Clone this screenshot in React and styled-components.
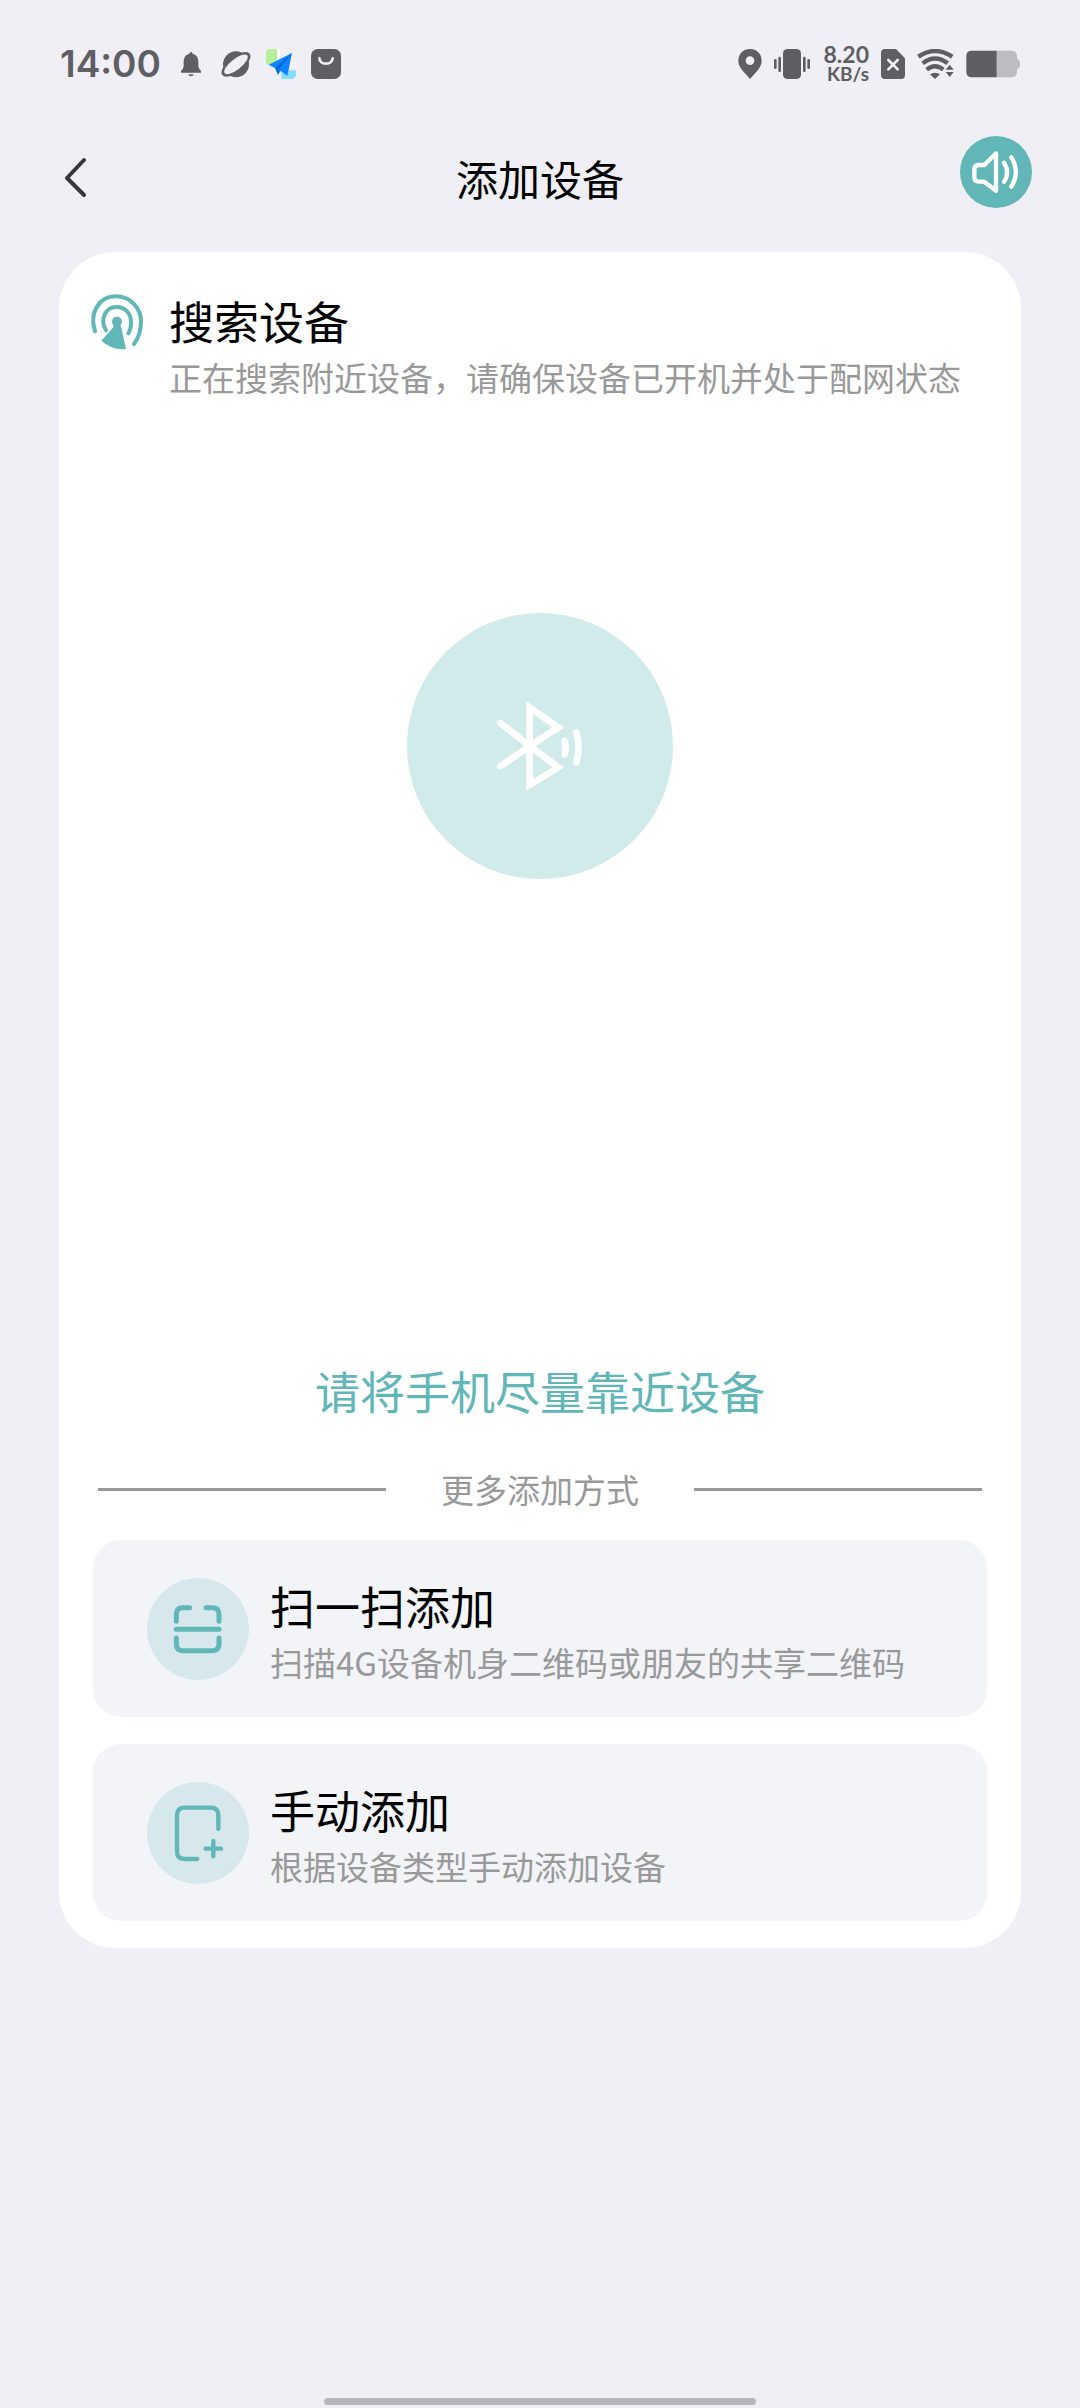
import React, { useState } from "react";
import styled, { createGlobalStyle } from "styled-components";

const options = [
  {
    id: "scan",
    title: "扫一扫添加",
    desc: "扫描4G设备机身二维码或朋友的共享二维码",
    Icon: ScanIcon,
  },
  {
    id: "manual",
    title: "手动添加",
    desc: "根据设备类型手动添加设备",
    Icon: ManualIcon,
  },
];

const App = () => {
  const [muted, setMuted] = useState(false);

  return (
    <>
      <GlobalStyle />
      <Page>
        <StatusBar>
          <StatusGroup $gap={15}>
            <Time>14:00</Time>
            <BellIcon />
            <PlanetIcon />
            <PlaneIcon />
            <BagIcon />
          </StatusGroup>
          <StatusGroup $gap={12}>
            <PinIcon />
            <VibrateIcon />
            <Speed>
              <SpeedValue>8.20</SpeedValue>
              <SpeedUnit>KB/s</SpeedUnit>
            </Speed>
            <SimIcon />
            <WifiIcon />
            <BatteryIcon />
          </StatusGroup>
        </StatusBar>

        <Header>
          <BackButton type="button" aria-label="返回">
            <svg width="24" height="42" viewBox="0 0 24 42" fill="none">
              <path
                d="M20 3L3 21L20 38"
                stroke="#38383c"
                strokeWidth="4"
                strokeLinecap="round"
                strokeLinejoin="round"
              />
            </svg>
          </BackButton>
          <PageTitle>添加设备</PageTitle>
          <SoundButton
            type="button"
            aria-label="语音提示"
            aria-pressed={!muted}
            onClick={() => setMuted((prev) => !prev)}
          >
            <SpeakerIcon muted={muted} />
          </SoundButton>
        </Header>

        <Main>
          <Card>
            <SearchHead>
              <RadarIcon />
              <TextBox>
                <ItemTitle as="h2">搜索设备</ItemTitle>
                <ItemDesc>正在搜索附近设备，请确保设备已开机并处于配网状态</ItemDesc>
              </TextBox>
            </SearchHead>

            <ScanArea>
              <ScanCircle>
                <BluetoothIcon />
              </ScanCircle>
            </ScanArea>

            <Hint>请将手机尽量靠近设备</Hint>

            <Divider>
              <Line />
              <ItemDesc>更多添加方式</ItemDesc>
              <Line />
            </Divider>

            <OptionList>
              {options.map(({ id, title, desc, Icon }) => (
                <Option key={id} type="button">
                  <Bubble>
                    <Icon />
                  </Bubble>
                  <TextBox>
                    <ItemTitle>{title}</ItemTitle>
                    <ItemDesc>{desc}</ItemDesc>
                  </TextBox>
                </Option>
              ))}
            </OptionList>
          </Card>
        </Main>

        <HomeBar />
      </Page>
    </>
  );
};

function BellIcon() {
  return (
    <svg width="30" height="30" viewBox="0 0 90 90" fill="#5f5e63">
      <path d="M45 9Q49 9 50 14Q66 18 67 36V52Q68 60 75 66V71H15V66Q22 60 23 52V36Q24 18 40 14Q41 9 45 9Z" />
      <path d="M37 76H53Q51 82 45 82Q39 82 37 76Z" />
    </svg>
  );
}

function PlanetIcon() {
  return (
    <svg width="30" height="30" viewBox="0 0 90 90" fill="none">
      <circle cx="45" cy="46" r="39" fill="#5f5e63" />
      <ellipse
        cx="45"
        cy="46"
        rx="52"
        ry="23"
        transform="rotate(-38 45 46)"
        fill="#5f5e63"
      />
      <ellipse
        cx="45"
        cy="46"
        rx="43"
        ry="16"
        transform="rotate(-38 45 46)"
        fill="#f0eff5"
      />
    </svg>
  );
}

function PlaneIcon() {
  return (
    <svg width="30" height="30" viewBox="0 0 90 90">
      <path d="M12 0H33V46H0V12Q0 0 12 0Z" fill="#b6f09a" />
      <path d="M33 0H42V46H33Z" fill="#fff" />
      <path d="M46 64H90V76Q90 90 76 90H46Z" fill="#86dcfb" />
      <path d="M78 12L8 47L28 58L36 77L44 66L64 80Z" fill="#0a84ff" />
      <path d="M78 12L28 58L36 77L38 61Z" fill="#0560cf" />
    </svg>
  );
}

function BagIcon() {
  return (
    <svg width="30" height="30" viewBox="0 0 90 90" fill="none">
      <rect width="90" height="90" rx="20" fill="#5f5e63" />
      <path
        d="M25 28Q27 44 45 44Q63 44 65 28"
        stroke="#f0eff5"
        strokeWidth="8"
        strokeLinecap="round"
      />
    </svg>
  );
}

function PinIcon() {
  return (
    <svg width="24" height="30" viewBox="0 0 72 90">
      <path
        fillRule="evenodd"
        d="M36 0Q51 0 61 10Q71 20 71 36Q71 48 60 63L36 90L12 63Q1 48 1 36Q1 20 11 10Q21 0 36 0ZM36 22A13 13 0 1 0 36 48A13 13 0 1 0 36 22Z"
        fill="#5f5e63"
      />
    </svg>
  );
}

function VibrateIcon() {
  return (
    <svg width="36" height="30" viewBox="0 0 108 90" fill="#5f5e63">
      <rect x="27" width="54" height="90" rx="13" />
      <path
        d="M4 34V56M17 27V65M91 27V65M104 34V56"
        stroke="#5f5e63"
        strokeWidth="8"
        strokeLinecap="round"
      />
    </svg>
  );
}

function SimIcon() {
  return (
    <svg width="24" height="30" viewBox="0 0 72 90">
      <path
        d="M12 0H45L72 28V78Q72 90 60 90H12Q0 90 0 78V12Q0 0 12 0Z"
        fill="#5f5e63"
      />
      <path
        d="M22 33L50 61M50 33L22 61"
        stroke="#f0eff5"
        strokeWidth="8"
        strokeLinecap="round"
      />
    </svg>
  );
}

function WifiIcon() {
  return (
    <svg width="37" height="30" viewBox="0 0 111 90" fill="none">
      <g stroke="#5f5e63" strokeWidth="13">
        <path d="M4 23Q54 -11 106 23" />
        <path d="M17 43Q54 14 92 43" />
        <path d="M29 62Q54 42 79 62" />
      </g>
      <path d="M39 76Q54 66 69 76L54 90Z" fill="#5f5e63" />
      <path d="M80 62L98 38L116 62V88H80Z" fill="#f0eff5" />
      <path d="M98 47L110 62H86ZM86 69H110L98 84Z" fill="#5f5e63" />
    </svg>
  );
}

function BatteryIcon() {
  return (
    <svg width="54" height="28" viewBox="0 0 162 84">
      <path
        d="M92 2H136Q152 2 153 18V26Q162 28 162 42Q162 56 153 58V66Q152 82 136 82H92Z"
        fill="#bdbcc1"
      />
      <path d="M18 2H92V82H18Q1 82 1 66V18Q1 2 18 2Z" fill="#5f5e63" />
    </svg>
  );
}

function SpeakerIcon({ muted }) {
  return (
    <svg width="72" height="72" viewBox="0 0 216 216" fill="none">
      <g
        stroke="#fff"
        strokeWidth="13"
        strokeLinecap="round"
        strokeLinejoin="round"
      >
        <path d="M108 52L73 87H56Q43 87 43 100V124Q43 137 56 137H73L108 164Z" />
        {!muted && (
          <>
            <path d="M132 80Q151 108 132 138" />
            <path d="M154 64Q181 108 154 152" />
          </>
        )}
      </g>
    </svg>
  );
}

function RadarIcon() {
  return (
    <svg width="52" height="56" viewBox="0 0 156 168" fill="none">
      <g stroke="#61b6b8" strokeWidth="12" strokeLinecap="round">
        <path d="M12 112C-6 54 26 7 74 7C122 7 150 46 150 82Q150 123 129 150" />
        <path d="M45 109C25 76 44 39 76 39C104 39 120 60 120 84Q120 106 112 118" />
      </g>
      <circle cx="78" cy="83" r="15" fill="#61b6b8" />
      <path
        d="M70 90L66 101L31 140Q62 169 105 165L91 101L86 90Z"
        fill="#61b6b8"
      />
    </svg>
  );
}

function BluetoothIcon() {
  return (
    <svg
      width="266"
      height="266"
      viewBox="0 0 798 798"
      fill="none"
      stroke="#fff"
      strokeWidth="20"
      strokeLinecap="round"
    >
      <path d="M280 330L368 399L454 463L368 516V284L454 343L368 399L280 460" />
      <path d="M473 384Q478 403 473 424" />
      <path d="M508 358Q522 402 508 448" />
    </svg>
  );
}

function ScanIcon() {
  return (
    <svg
      width="102"
      height="102"
      viewBox="0 0 306 306"
      fill="none"
      stroke="#61b6b8"
      strokeWidth="15"
      strokeLinecap="round"
    >
      <path d="M88 130V109Q88 89 108 89H128" />
      <path d="M177 89H196Q216 89 216 109V130" />
      <path d="M88 154H216" />
      <path d="M88 180V198Q88 218 108 218H196Q216 218 216 198V180" />
    </svg>
  );
}

function ManualIcon() {
  return (
    <svg
      width="102"
      height="102"
      viewBox="0 0 306 306"
      fill="none"
      stroke="#61b6b8"
      strokeWidth="13"
      strokeLinecap="round"
    >
      <path d="M214 141V100Q214 77 191 77H113Q90 77 90 100V208Q90 231 113 231H151" />
      <path d="M176 200H222M199 177V223" />
    </svg>
  );
}

const GlobalStyle = createGlobalStyle`
  * {
    box-sizing: border-box;
    margin: 0;
    padding: 0;
  }

  body {
    background-color: #f0eff5;
    font-family: "Noto Sans CJK SC", sans-serif;
  }

  button {
    border: none;
    background: none;
    font: inherit;
    color: inherit;
    cursor: pointer;
  }

  svg {
    display: block;
    flex-shrink: 0;
  }
`;

const Page = styled.div`
  min-height: 100vh;
  display: flex;
  flex-direction: column;
`;

const StatusBar = styled.div`
  height: 128px;
  padding: 0 60px;
  display: flex;
  align-items: center;
  justify-content: space-between;
  color: #5f5e63;
`;

const StatusGroup = styled.div`
  display: flex;
  align-items: center;
  gap: ${({ $gap }) => $gap}px;
`;

const Time = styled.span`
  font-family: Inter, sans-serif;
  font-size: 37px;
  font-weight: 600;
  line-height: 40px;
`;

const Speed = styled.div`
  min-width: 47px;
  display: flex;
  flex-direction: column;
  align-items: flex-end;
  font-family: Lato, sans-serif;
  font-weight: 700;
  line-height: 20px;
`;

const SpeedValue = styled.span`
  font-size: 23px;
`;

const SpeedUnit = styled.span`
  font-size: 19px;
`;

const Header = styled.header`
  height: 100px;
  padding: 0 48px 0 60px;
  display: grid;
  grid-template-columns: 72px 1fr 84px;
  align-items: center;
`;

const BackButton = styled.button`
  width: 72px;
  height: 72px;
  padding-left: 4px;
  display: flex;
  align-items: center;
`;

const PageTitle = styled.h1`
  font-size: 42px;
  font-weight: 400;
  line-height: 60px;
  text-align: center;
`;

const SoundButton = styled.button`
  width: 72px;
  height: 72px;
  margin-top: 8px;
  align-self: start;
  justify-self: end;
  border-radius: 50%;
  background-color: #61b6b8;
`;

const Main = styled.main`
  padding: 24px 59px;
`;

const Card = styled.section`
  padding: 36px 32px 27px;
  border-radius: 56px;
  background-color: #fff;
`;

const SearchHead = styled.div`
  display: flex;
  align-items: flex-start;
  gap: 26px;

  > svg {
    margin-top: 6px;
  }
`;

const TextBox = styled.span`
  display: flex;
  flex-direction: column;
  text-align: left;
`;

const ItemTitle = styled.span`
  font-size: 45px;
  font-weight: 400;
  line-height: 66px;
  color: #000;
`;

const ItemDesc = styled.span`
  font-size: 33px;
  line-height: 46px;
  color: #999;
`;

const ScanArea = styled.div`
  padding: 213px 0 479px;
  display: flex;
  justify-content: center;
`;

const ScanCircle = styled.div`
  border-radius: 50%;
  background-color: #d1ebea;
`;

const Hint = styled.p`
  font-size: 45px;
  line-height: 66px;
  text-align: center;
  color: #61b6b8;
`;

const Divider = styled.div`
  margin: 42px 7px 28px;
  display: flex;
  align-items: center;
  gap: 55px;
`;

const Line = styled.span`
  flex: 1;
  height: 3px;
  background-color: #999;
`;

const OptionList = styled.div`
  padding: 0 2px;
  display: flex;
  flex-direction: column;
  gap: 27px;
`;

const Option = styled.button`
  min-height: 177px;
  padding: 0 54px;
  display: flex;
  align-items: center;
  gap: 21px;
  border-radius: 28px;
  background-color: #f3f4f8;
`;

const Bubble = styled.span`
  border-radius: 50%;
  background-color: #d6e8ec;
`;

const HomeBar = styled.div`
  width: 40%;
  height: 7px;
  margin: auto auto 3px;
  border-radius: 4px;
  background-color: #b6b5ba;
`;

export default App;
